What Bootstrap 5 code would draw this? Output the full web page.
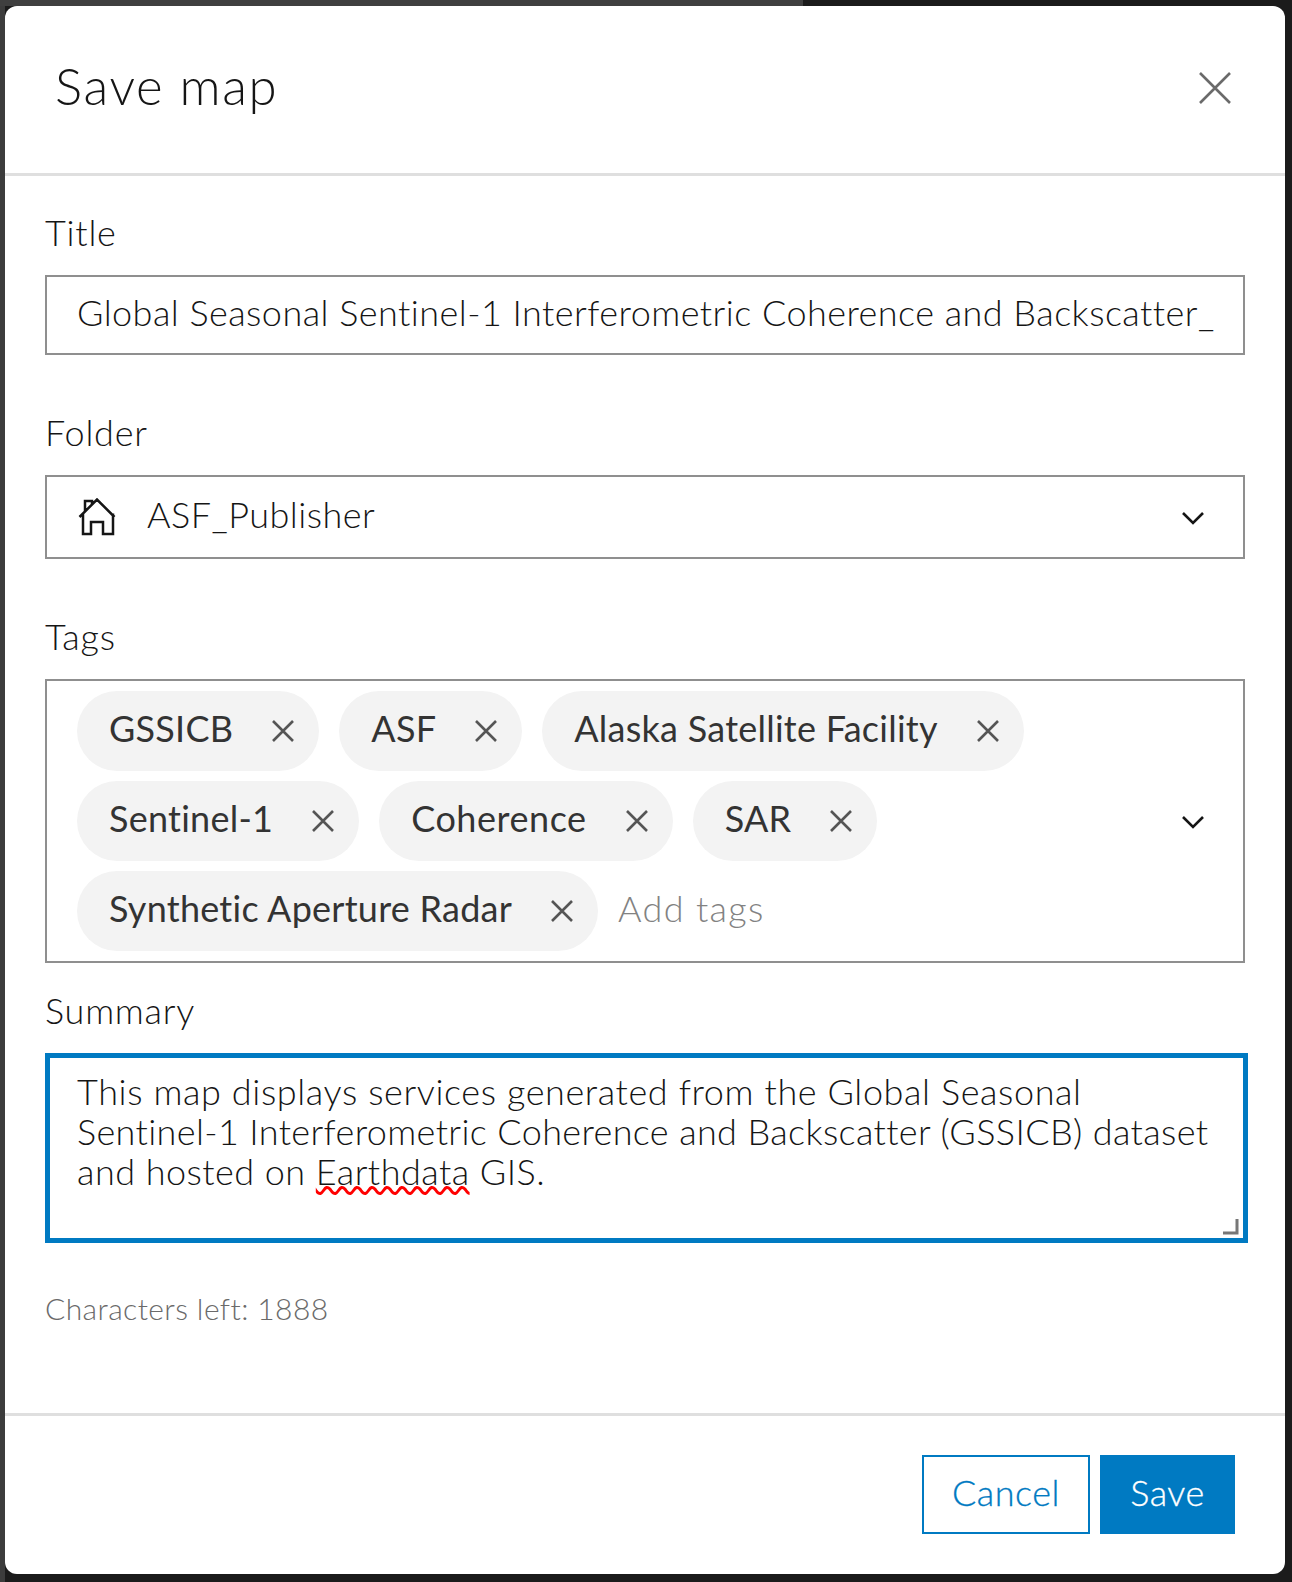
<!DOCTYPE html>
<html lang="en"><head><meta charset="utf-8"><title>Save map</title>
<link href="https://cdn.jsdelivr.net/npm/bootstrap@5.3.0/dist/css/bootstrap.min.css" rel="stylesheet">
<style>
html,body{height:100%}
body{margin:0;background:linear-gradient(90deg,#3c3c3c 0 5px,#1b1b1b 5px);font-family:"Lato","Liberation Sans",sans-serif;font-weight:300;color:#151515;padding:6px 7px 8px 5px;overflow:hidden}
.top-strip{position:absolute;left:0;top:0;width:803px;height:6px;background:#3f3f3f}
.dlg{height:1568px;border:0;border-radius:12px;background:#fff;display:flex;flex-direction:column}
.dlg-head{height:170px;flex:none;border-bottom:3px solid #dfdfdf;padding:0 53px 4px 50px;display:flex;align-items:center;justify-content:space-between}
.dlg-title{font-size:51px;font-weight:300;margin:0 0 4px;line-height:1;letter-spacing:1.6px}
.dlg-body{flex:1;padding:0 40px}
.fld-label{display:block;font-size:36px;line-height:40px;margin:0;letter-spacing:.75px}
.fld-box{border:2px solid #8f8f8f;border-radius:0;background:#fff;color:#151515;font-size:36px;font-weight:300;letter-spacing:.46px;box-shadow:none}
.title-box{height:80px;line-height:71px;padding:0 30px;white-space:nowrap;overflow:hidden;margin-top:23px}
.folder-box{height:84px;padding:0 38px 0 31px;margin-top:23px}
.folder-name{margin:0 0 6px 31px}
.chev{margin-top:1px}
.tags-box{height:284px;padding:10px 38px 10px 30px;margin-top:23px}
.chip-wrap{gap:10px 20px;width:1000px}
.tag-chip{height:80px;border-radius:40px;background:#f3f3f3;padding:0 25px 6px 32px;font-weight:400;color:#333;display:inline-flex;align-items:center;font-size:36px;letter-spacing:.25px}
.chip-wide{letter-spacing:.55px}
.tag-chip svg{margin:6px 0 0 39px}
.add-tags{color:#828282;height:80px;display:inline-flex;align-items:center;font-weight:300;letter-spacing:1.3px;padding-bottom:6px}
.sum-box{height:190px;border:5px solid #007ac2;width:1203px;position:relative;padding:13px 27px;line-height:40px;margin-top:23px}
.sum-a{letter-spacing:.6px}
.sum-b{letter-spacing:.37px}
.grip{position:absolute;right:4px;bottom:3px}
.spell{text-decoration:underline wavy #f00 3px;text-underline-offset:1px}
.chars-left{font-size:30px;color:#6a6a6a;line-height:40px;margin-top:45px;letter-spacing:.4px}
.dlg-foot{height:161px;flex:none;border-top:3px solid #dfdfdf;padding:39px 50px 0 0;display:flex;justify-content:flex-end;gap:10px;align-items:flex-start}
.act-btn{height:79px;border-radius:0;font-size:36px;font-weight:300;padding:0 0 5px;border:2px solid #007ac2;letter-spacing:.55px;line-height:1;-webkit-text-stroke:.3px currentColor}
.act-cancel{width:168px;background:#fff;color:#007ac2}
.act-save{width:135px;background:#007ac2;color:#fff}
</style></head>
<body>
<div class="top-strip"></div>
<div class="modal-content dlg">
  <div class="modal-header dlg-head">
    <h1 class="modal-title dlg-title">Save map</h1>
    <svg width="34" height="34" viewBox="0 0 34 34" fill="none" stroke="#6a6a6a" stroke-width="2.6"><path d="M2 2 32 32M32 2 2 32"/></svg>
  </div>
  <div class="modal-body dlg-body">
    <label class="fld-label" style="margin-top:36px">Title</label>
    <div class="fld-box title-box">Global Seasonal Sentinel-1 Interferometric Coherence and Backscatter_</div>
    <label class="fld-label" style="margin-top:57px">Folder</label>
    <div class="fld-box folder-box d-flex align-items-center">
      <svg width="38" height="38" viewBox="0 0 38 38" fill="none" stroke="#151515" stroke-width="2.5"><path d="M1.5 19 19 1.5 36.5 19M5 15.5V36h8V24h12v12h10V15.5M7 13V3h7v4"/></svg>
      <span class="folder-name">ASF_Publisher</span>
      <svg class="ms-auto chev" width="24" height="16" viewBox="0 0 24 16" fill="none" stroke="#151515" stroke-width="2.6"><path d="M2 3l10 10L22 3"/></svg>
    </div>
    <label class="fld-label" style="margin-top:57px">Tags</label>
    <div class="fld-box tags-box d-flex align-items-center">
      <div class="d-flex flex-wrap chip-wrap flex-grow-1">
        <span class="tag-chip">GSSICB<svg width="22" height="22" viewBox="0 0 22 22" fill="none" stroke="#555" stroke-width="2.6"><path d="M1 1l20 20M21 1 1 21"/></svg></span>
        <span class="tag-chip">ASF<svg width="22" height="22" viewBox="0 0 22 22" fill="none" stroke="#555" stroke-width="2.6"><path d="M1 1l20 20M21 1 1 21"/></svg></span>
        <span class="tag-chip">Alaska Satellite Facility<svg width="22" height="22" viewBox="0 0 22 22" fill="none" stroke="#555" stroke-width="2.6"><path d="M1 1l20 20M21 1 1 21"/></svg></span>
        <span class="tag-chip">Sentinel-1<svg width="22" height="22" viewBox="0 0 22 22" fill="none" stroke="#555" stroke-width="2.6"><path d="M1 1l20 20M21 1 1 21"/></svg></span>
        <span class="tag-chip chip-wide">Coherence<svg width="22" height="22" viewBox="0 0 22 22" fill="none" stroke="#555" stroke-width="2.6"><path d="M1 1l20 20M21 1 1 21"/></svg></span>
        <span class="tag-chip">SAR<svg width="22" height="22" viewBox="0 0 22 22" fill="none" stroke="#555" stroke-width="2.6"><path d="M1 1l20 20M21 1 1 21"/></svg></span>
        <span class="tag-chip">Synthetic Aperture Radar<svg width="22" height="22" viewBox="0 0 22 22" fill="none" stroke="#555" stroke-width="2.6"><path d="M1 1l20 20M21 1 1 21"/></svg></span>
        <span class="add-tags">Add tags</span>
      </div>
      <svg class="ms-auto chev" width="24" height="16" viewBox="0 0 24 16" fill="none" stroke="#151515" stroke-width="2.6"><path d="M2 3l10 10L22 3"/></svg>
    </div>
    <label class="fld-label" style="margin-top:27px">Summary</label>
    <div class="fld-box sum-box"><span class="sum-a">This map displays services generated from the Global Seasonal</span><br><span class="sum-b">Sentinel-1 Interferometric Coherence and Backscatter (GSSICB) dataset</span><br>and hosted on <span class="spell">Earthdata</span> GIS.
      <svg class="grip" width="16" height="16" viewBox="0 0 16 16" fill="none" stroke="#777" stroke-width="3"><path d="M14 0v14H0"/></svg>
    </div>
    <div class="chars-left">Characters left: 1888</div>
  </div>
  <div class="modal-footer dlg-foot">
    <button class="btn act-btn act-cancel" type="button">Cancel</button>
    <button class="btn act-btn act-save" type="button">Save</button>
  </div>
</div>
<script src="https://cdn.jsdelivr.net/npm/bootstrap@5.3.0/dist/js/bootstrap.bundle.min.js"></script>
</body></html>
